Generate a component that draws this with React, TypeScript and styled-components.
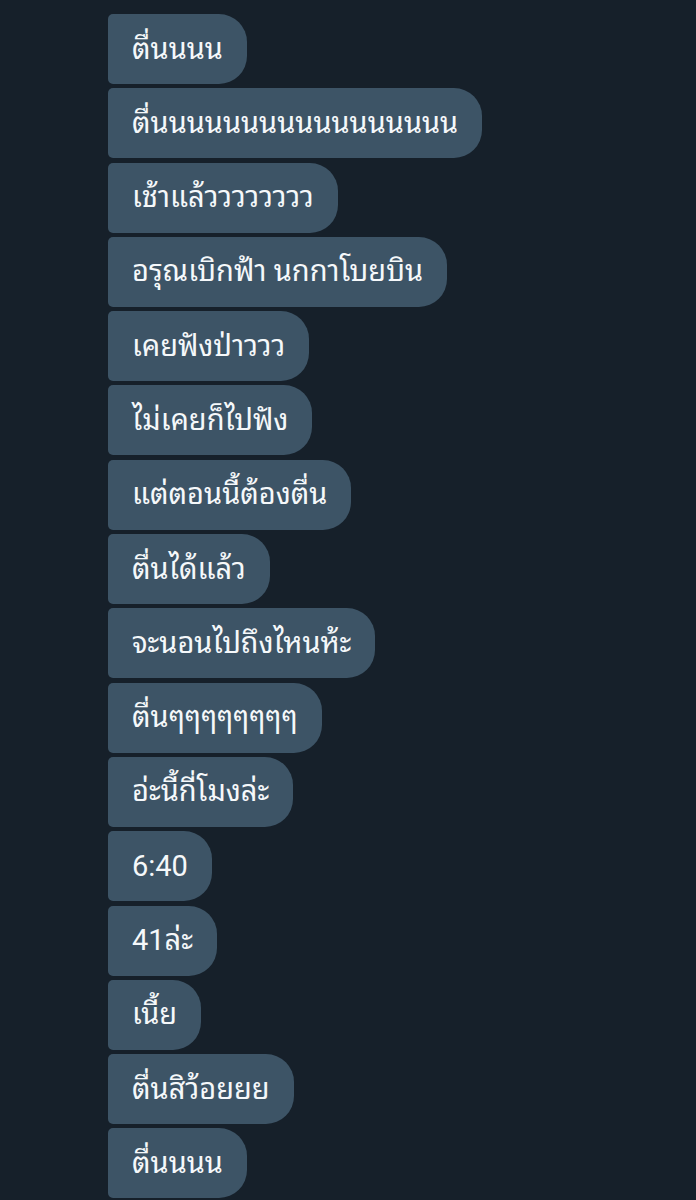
import React from "react";
import styled, { createGlobalStyle } from "styled-components";

const GlobalStyle = createGlobalStyle`
  html, body {
    margin: 0;
    padding: 0;
    background: #16202a;
  }
  body {
    font-family: Roboto, "Noto Sans Thai Looped", "Noto Sans Thai UI", "Noto Serif Thai", "Noto Sans Thai", sans-serif;
  }
`;

const Thread = styled.div`
  display: flex;
  flex-direction: column;
  align-items: flex-start;
  gap: 4.3px;
  padding: 14px 0 0 108px;
  min-height: 1200px;
  box-sizing: border-box;
  background: #16202a;
`;

const Bubble = styled.div`
  display: inline-flex;
  align-items: center;
  height: 70px;
  box-sizing: border-box;
  padding: 0 24px;
  background: #3d5466;
  color: #f5f8fa;
  font-size: 29px;
  line-height: 1;
  border-radius: 5px 28px 28px 5px;
  white-space: nowrap;
`;

const messages = [
  "ตื่" + "น".repeat(4),
  "ตื่" + "น".repeat(17),
  "เช้าแล้" + "ว".repeat(8),
  "อรุณเบิกฟ้า นกกาโบยบิน",
  "เคยฟังป่า" + "ว".repeat(3),
  "ไม่เคยก็ไปฟัง",
  "แต่ตอนนี้ต้องตื่น",
  "ตื่นได้แล้ว",
  "จะนอนไปถึงไหนห้ะ",
  "ตื่น" + "ๆ".repeat(8),
  "อ่ะนี้กี่โมงล่ะ",
  "6:40",
  "41ล่ะ",
  "เนี้ย",
  "ตื่นสิว้อยยย",
  "ตื่" + "น".repeat(4),
];

export default function App() {
  return (
    <>
      <GlobalStyle />
      <Thread>
        {messages.map((m, i) => (
          <Bubble key={i}>{m}</Bubble>
        ))}
      </Thread>
    </>
  );
}
